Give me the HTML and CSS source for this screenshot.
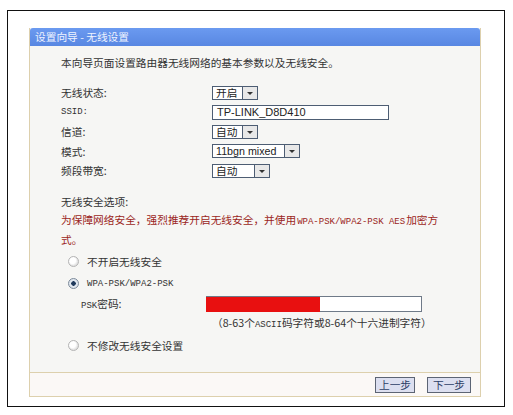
FILE: index.html
```html
<!DOCTYPE html>
<html lang="zh-CN">
<head>
    <meta charset="UTF-8">
    <title>设置向导 - 无线设置</title>
    <link rel="stylesheet" href="styles.css">
</head>
<body>
    <div class="frame">
        <div class="panel">
            <!-- Title bar -->
            <div class="panel-title">设置向导 - 无线设置</div>

            <div class="panel-body">
                <p class="intro">本向导页面设置路由器无线网络的基本参数以及无线安全。</p>

                <div class="form-rows">
                    <div class="row">
                        <span class="label">无线状态:</span>
                        <span class="select w-46"><span class="val">开启</span><span class="arrow"></span></span>
                    </div>
                    <div class="row">
                        <span class="label mono">SSID:</span>
                        <span class="text-input w-177">TP-LINK_D8D410</span>
                    </div>
                    <div class="row">
                        <span class="label">信道:</span>
                        <span class="select w-46"><span class="val">自动</span><span class="arrow"></span></span>
                    </div>
                    <div class="row">
                        <span class="label">模式:</span>
                        <span class="select w-88"><span class="val">11bgn mixed</span><span class="arrow"></span></span>
                    </div>
                    <div class="row">
                        <span class="label">频段带宽:</span>
                        <span class="select w-58"><span class="val">自动</span><span class="arrow"></span></span>
                    </div>
                </div>

                <div class="security">
                    <p class="sec-title">无线安全选项:</p>
                    <p class="warn"><span>为保障网络安全，强烈推荐开启无线安全，并使用</span><span class="mono">WPA-PSK/WPA2-PSK AES</span><span>加密方</span><span>式。</span></p>

                    <div class="radio-row">
                        <span class="radio"></span>
                        <span>不开启无线安全</span>
                    </div>
                    <div class="radio-row">
                        <span class="radio checked"></span>
                        <span class="mono">WPA-PSK/WPA2-PSK</span>
                    </div>
                    <div class="psk-row">
                        <span class="psk-label"><span class="mono">PSK</span>密码:</span>
                        <span class="psk-input"><span class="redact"></span></span>
                    </div>
                    <p class="hint">（8-63个<span class="mono">ASCII</span>码字符或8-64个十六进制字符）</p>
                    <div class="radio-row">
                        <span class="radio"></span>
                        <span>不修改无线安全设置</span>
                    </div>
                </div>
            </div>

            <!-- Footer buttons -->
            <div class="panel-footer">
                <button class="btn">上一步</button>
                <button class="btn">下一步</button>
            </div>
        </div>
    </div>
</body>
</html>
```

FILE: styles.css
```css
/* Page */
body {
    margin: 0;
    background: #fff;
    font-family: "Noto Sans CJK SC", "Noto Sans", sans-serif;
    font-size: 10.7px;
    color: #333;
}

p {
    margin: 0;
}

.mono {
    font-family: "Liberation Mono", "DejaVu Sans Mono", monospace;
    font-size: 9px;
}

/* Outer frame */
.frame {
    margin: 10px 0 0 7px;
    width: 498px;
    height: 397px;
    border: 1px solid #111;
    padding: 17px 0 0 21px;
    box-sizing: border-box;
}

/* Panel */
.panel {
    width: 450px;
    border: 1px solid #ddd0ad;
    border-top: none;
    background: #f6f6f4;
}

.panel-title {
    height: 18px;
    line-height: 18px;
    background: linear-gradient(#6b9af0, #5887e2);
    color: #eef3ff;
    padding-left: 5px;
    font-size: 10.7px;
    border-radius: 3px 3px 0 0;
}

.panel-body {
    padding: 8px 0 15px 31px;
}

.intro {
    height: 18px;
    line-height: 18px;
}

/* Form rows */
.form-rows {
    margin-top: 11px;
}

.row {
    display: flex;
    align-items: center;
    height: 19.5px;
}

.label {
    width: 151px;
}

.select {
    display: inline-flex;
    height: 14px;
    border: 1px solid #4d5d73;
    background: #fff;
    box-sizing: border-box;
    font-size: 10.7px;
    line-height: 12px;
}

.select .val {
    flex: 1;
    padding-left: 3px;
    color: #222;
    font-family: "Liberation Sans", "Noto Sans CJK SC", sans-serif;
}

.select .arrow {
    width: 14px;
    border-left: 1px solid #4d5d73;
    background: #e8e8e8;
    position: relative;
}

.select .arrow::after {
    content: "";
    position: absolute;
    left: 4px;
    top: 5px;
    border-left: 3px solid transparent;
    border-right: 3px solid transparent;
    border-top: 3px solid #333;
}

.w-46 { width: 46px; }
.w-58 { width: 58px; }
.w-88 { width: 88px; }

.text-input {
    width: 177px;
    height: 15px;
    border: 1px solid #4d5d73;
    background: #fff;
    box-sizing: border-box;
    padding-left: 4px;
    font-family: "Liberation Sans", sans-serif;
    font-size: 11px;
    line-height: 13px;
    color: #222;
}

/* Security */
.security {
    margin-top: 12px;
}

.sec-title {
    line-height: 18px;
}

.warn {
    width: 380px;
    margin-bottom: 2px;
    color: #9b1f22;
    line-height: 18px;
}

.warn .mono {
    padding: 0 1px;
}

.radio-row {
    display: flex;
    align-items: center;
    height: 22px;
    padding-left: 7px;
}

.radio {
    width: 11px;
    height: 11px;
    border: 1px solid #b4b4b4;
    border-radius: 50%;
    background: radial-gradient(circle at 40% 40%, #fff 0 3px, #e4e4e4 5px);
    margin-right: 8px;
    box-sizing: border-box;
}

.radio.checked {
    border-color: #7c8a9a;
    background: radial-gradient(circle, #1f3a5c 0 2px, #dfe6ee 2.5px);
}

.psk-row {
    display: flex;
    align-items: center;
    height: 18px;
    padding-left: 20px;
}

.psk-label {
    width: 125px;
}

.psk-input {
    width: 216px;
    height: 16px;
    border: 1px solid #6f7a88;
    background: #fff;
    box-sizing: border-box;
    position: relative;
}

.redact {
    position: absolute;
    left: -1px;
    top: 0;
    width: 114px;
    height: 15px;
    background: #e81010;
}

.hint {
    padding-left: 151px;
    line-height: 20px;
    color: #333;
}

/* Footer */
.panel-footer {
    display: flex;
    justify-content: flex-end;
    gap: 12px;
    padding: 4px 9px 3px 0;
    border-top: 1px solid #ddd0ad;
    background: #fbf8f6;
}

.btn {
    width: 40px;
    height: 16px;
    padding: 0;
    border: 1px solid #5c6474;
    background: #dcdff0;
    color: #2c3e66;
    font-family: "Noto Sans CJK SC", sans-serif;
    font-size: 10.7px;
    line-height: 13px;
}

.btn + .btn {
    width: 44px;
}
```
